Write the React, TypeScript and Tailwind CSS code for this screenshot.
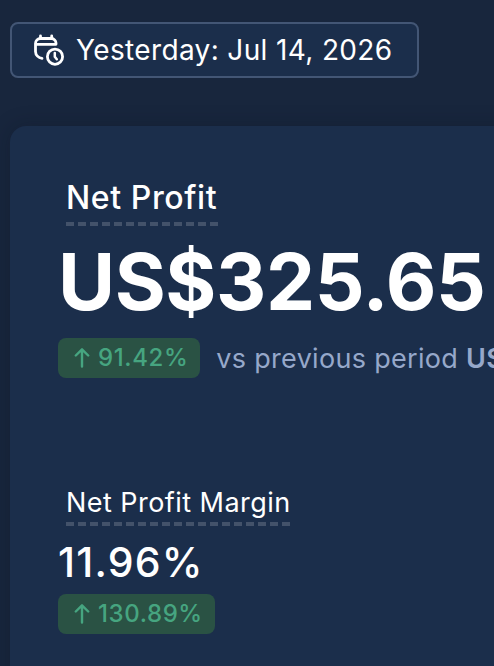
import React from "react";

function CalendarClock() {
  return (
    <svg width="32" height="34" viewBox="0 0 32 34" fill="none" stroke="currentColor" strokeWidth="2.800" strokeLinecap="round" strokeLinejoin="round" className="shrink-0">
      <path d="M6.500 5.500V3M17.700 5.500V3" />
      <path d="M1.500 11.300H22M8 25.300A7 7 0 0 1 1.500 18.500V10.500A5 5 0 0 1 6.500 5.500H17.500A4.800 4.800 0 0 1 22 10V11" />
      <circle cx="21" cy="23.700" r="7.600" />
      <path d="M20.800 20V23.700L22.800 26.200" strokeWidth="2.500" />
    </svg>
  );
}

function ArrowUp() {
  return (
    <svg width="16" height="20" viewBox="0 0 16 20" fill="none" stroke="currentColor" strokeWidth="2.400" strokeLinecap="round" strokeLinejoin="round" className="shrink-0">
      <path d="M8 18.500V1.500M1.800 7.500L8 1.300L14.200 7.500" />
    </svg>
  );
}

function Badge({ value }: { value: string }) {
  return (
    <span className="flex h-10 w-fit items-center gap-2 rounded-lg bg-[#2a5244] pr-3 pl-4 text-[24px] leading-none font-medium tracking-[0.6px] text-[#46a580]">
      <ArrowUp />
      <span>{value}</span>
    </span>
  );
}

const dashes = "h-1 bg-[repeating-linear-gradient(90deg,#43526a_0_8px,transparent_8px_12px)]";

export default function App() {
  return (
    <div className="h-[666px] w-[494px] overflow-hidden bg-[#18263d] pt-[22px] pl-[10px] font-['Inter',sans-serif] whitespace-nowrap text-white">
      <button className="flex h-14 w-[409px] items-center rounded-lg border-2 border-[#435675] bg-[#1b2e4b] pl-[22px]">
        <CalendarClock />
        <span className="ml-[10px] text-[28px] leading-9 tracking-[0.360px]">Yesterday: Jul 14, 2026</span>
      </button>
      <main className="mt-12 h-[560px] w-[560px] rounded-tl-2xl bg-[#1b2e4b] pt-[52px] pl-12 shadow-[0_0_20px_rgba(10,18,32,0.28)]">
        <section className="h-[308px]">
          <div className="ml-2 w-[152px]">
            <h2 className="h-11 text-[32px] leading-10 font-medium tracking-[0.6px]">Net Profit</h2>
            <div className={dashes} />
          </div>
          <div className="mt-2 h-[104px] text-[78px] leading-[95px] font-bold tracking-[-0.4px]">US$325.65</div>
          <div className="flex h-10 items-center">
            <Badge value="91.42%" />
            <p className="ml-4 pt-px text-[27px] leading-10 tracking-[0.3px] text-[#96a8ca]">
              vs previous period <span className="font-semibold">US$170.12</span>
            </p>
          </div>
        </section>
        <section>
          <div className="ml-2 w-[225px]">
            <h3 className="h-9 pt-px text-[27px] leading-8 tracking-[0.450px]">Net Profit Margin</h3>
            <div className={dashes} />
          </div>
          <div className="mt-3 h-14 text-[41px] leading-[48px] font-medium tracking-[1.200px]">11.96%</div>
          <Badge value="130.89%" />
        </section>
      </main>
    </div>
  );
}
